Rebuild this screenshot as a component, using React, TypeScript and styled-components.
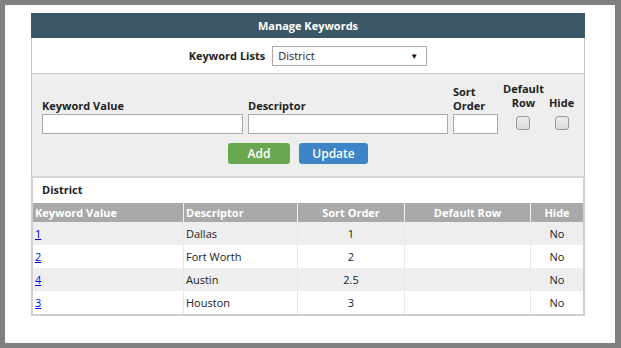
import React, { useState } from "react";
import styled, { createGlobalStyle } from "styled-components";

interface Keyword {
    id: string;
    descriptor: string;
    sortOrder: string;
    defaultRow: string;
    hide: string;
}

const keywords: Keyword[] = [
    { id: "1", descriptor: "Dallas", sortOrder: "1", defaultRow: "", hide: "No" },
    { id: "2", descriptor: "Fort Worth", sortOrder: "2", defaultRow: "", hide: "No" },
    { id: "4", descriptor: "Austin", sortOrder: "2.5", defaultRow: "", hide: "No" },
    { id: "3", descriptor: "Houston", sortOrder: "3", defaultRow: "", hide: "No" },
];

const App: React.FC = () => {
    const [list, setList] = useState("District");

    return (
        <>
            <GlobalStyle />
            <Frame>
                <Panel>
                    <Header>Manage Keywords</Header>
                    <ListRow>
                        <ListLabel>Keyword Lists</ListLabel>
                        <SelectBox>
                            <span>{list}</span>
                            <Arrow>▼</Arrow>
                            <HiddenSelect value={list} onChange={(e) => setList(e.target.value)}>
                                <option>District</option>
                            </HiddenSelect>
                        </SelectBox>
                    </ListRow>

                    <Form>
                        <Fields>
                            <Field>
                                <Label>Keyword Value</Label>
                                <TextInput $width={201} />
                            </Field>
                            <Field>
                                <Label>Descriptor</Label>
                                <TextInput $width={200} />
                            </Field>
                            <Field>
                                <Label>Sort<br />Order</Label>
                                <TextInput $width={45} />
                            </Field>
                            <CheckField $width={50}>
                                <Label>Default<br />Row</Label>
                                <Check />
                            </CheckField>
                            <CheckField $width={26}>
                                <Label>Hide</Label>
                                <Check />
                            </CheckField>
                        </Fields>
                        <Buttons>
                            <Button $color="#6aa84f" $width={62}>Add</Button>
                            <Button $color="#3d85c6" $width={69}>Update</Button>
                        </Buttons>
                    </Form>

                    <ListSection>
                        <SectionTitle>{list}</SectionTitle>
                        <Table>
                            <thead>
                                <tr>
                                    <Th $width={146} $align="left">Keyword Value</Th>
                                    <Th $width={109} $align="left">Descriptor</Th>
                                    <Th $width={102}>Sort Order</Th>
                                    <Th $width={121}>Default Row</Th>
                                    <Th>Hide</Th>
                                </tr>
                            </thead>
                            <tbody>
                                {keywords.map((k) => (
                                    <Row key={k.id}>
                                        <Td $align="left"><KeyLink href="#">{k.id}</KeyLink></Td>
                                        <Td $align="left">{k.descriptor}</Td>
                                        <Td>{k.sortOrder}</Td>
                                        <Td>{k.defaultRow}</Td>
                                        <Td>{k.hide}</Td>
                                    </Row>
                                ))}
                            </tbody>
                        </Table>
                    </ListSection>
                </Panel>
            </Frame>
        </>
    );
};

const GlobalStyle = createGlobalStyle`
  html, body {
    margin: 0;
    padding: 0;
    background: #7f7f7f;
  }
  body {
    font-family: "Open Sans", "Noto Sans", sans-serif;
    font-size: 11px;
    color: #222;
  }
`;

const Frame = styled.div`
  margin: 5px 6px 5px 5px;
  height: 338px;
  background: #ffffff;
  padding: 8px 0 0 26px;
  box-sizing: border-box;
`;

const Panel = styled.div`
  width: 554px;
  border: 1px solid #c8c8c8;
  border-top: none;
  box-sizing: border-box;
  background: #ffffff;
`;

const Header = styled.div`
  height: 25px;
  background: #3c5866;
  color: #ffffff;
  font-weight: 700;
  display: flex;
  align-items: center;
  justify-content: center;
  margin: 0 -1px;
`;

const ListRow = styled.div`
  height: 35px;
  display: flex;
  align-items: center;
  justify-content: center;
  gap: 7px;
  border-bottom: 1px solid #c8c8c8;
`;

const ListLabel = styled.span`
  font-weight: 700;
`;

const SelectBox = styled.div`
  position: relative;
  width: 155px;
  height: 20px;
  border: 1px solid #a9a9a9;
  box-sizing: border-box;
  display: flex;
  align-items: center;
  justify-content: space-between;
  padding: 0 8px 0 5px;
  background: #fff;
`;

const Arrow = styled.span`
  font-size: 8px;
  color: #111;
`;

const HiddenSelect = styled.select`
  position: absolute;
  inset: 0;
  opacity: 0;
`;

const Form = styled.div`
  background: #eeeeee;
  padding: 8px 10px 12px;
  border-bottom: 2px solid #d4d4d4;
`;

const Fields = styled.div`
  display: flex;
  align-items: flex-end;
  gap: 5px;
`;

const Field = styled.div`
  display: flex;
  flex-direction: column;
`;

const CheckField = styled.div<{ $width: number }>`
  display: flex;
  flex-direction: column;
  align-items: center;
  width: ${(p) => p.$width}px;
  text-align: center;
`;

const Label = styled.label`
  font-weight: 700;
  line-height: 14px;
  margin-bottom: 1px;
`;

const TextInput = styled.input<{ $width: number }>`
  width: ${(p) => p.$width}px;
  height: 20px;
  box-sizing: border-box;
  border: 1px solid #a9a9a9;
  background: #fff;
  margin: 0;
`;

const Check = styled.span`
  width: 12px;
  height: 12px;
  margin: 5px 0 4px;
  border: 1px solid #9a9a9a;
  border-radius: 3px;
  background: linear-gradient(#eaeaea, #dcdcdc);
`;

const Buttons = styled.div`
  display: flex;
  justify-content: center;
  gap: 9px;
  margin-top: 9px;
  padding-right: 20px;
`;

const Button = styled.button<{ $color: string; $width: number }>`
  width: ${(p) => p.$width}px;
  height: 21px;
  border: none;
  border-radius: 3px;
  background: ${(p) => p.$color};
  color: #ffffff;
  font-family: inherit;
  font-size: 12px;
  font-weight: 600;
  cursor: pointer;
`;

const ListSection = styled.div`
  border: 2px solid #cfcfcf;
  border-top: none;
  margin: 0 -1px -1px;
`;

const SectionTitle = styled.div`
  font-weight: 700;
  padding: 4px 9px 6px;
`;

const Table = styled.table`
  width: 100%;
  border-collapse: collapse;
`;

const Th = styled.th<{ $width?: number; $align?: string }>`
  width: ${(p) => (p.$width ? `${p.$width}px` : "auto")};
  text-align: ${(p) => p.$align || "center"};
  background: #a9a9a9;
  color: #ffffff;
  font-weight: 700;
  height: 19px;
  padding: 0 2px;
  border-left: 1px solid #f2f2f2;
  &:first-child {
    border-left: none;
  }
`;

const Row = styled.tr`
  &:nth-child(odd) {
    background: #eeeeee;
  }
  &:nth-child(even) {
    background: #ffffff;
  }
`;

const Td = styled.td<{ $align?: string }>`
  text-align: ${(p) => p.$align || "center"};
  height: 23px;
  padding: 0 2px;
  border-left: 1px solid #e8e8e8;
  &:first-child {
    border-left: none;
  }
`;

const KeyLink = styled.a`
  color: #0000ee;
  text-decoration: underline;
`;

export default App;
